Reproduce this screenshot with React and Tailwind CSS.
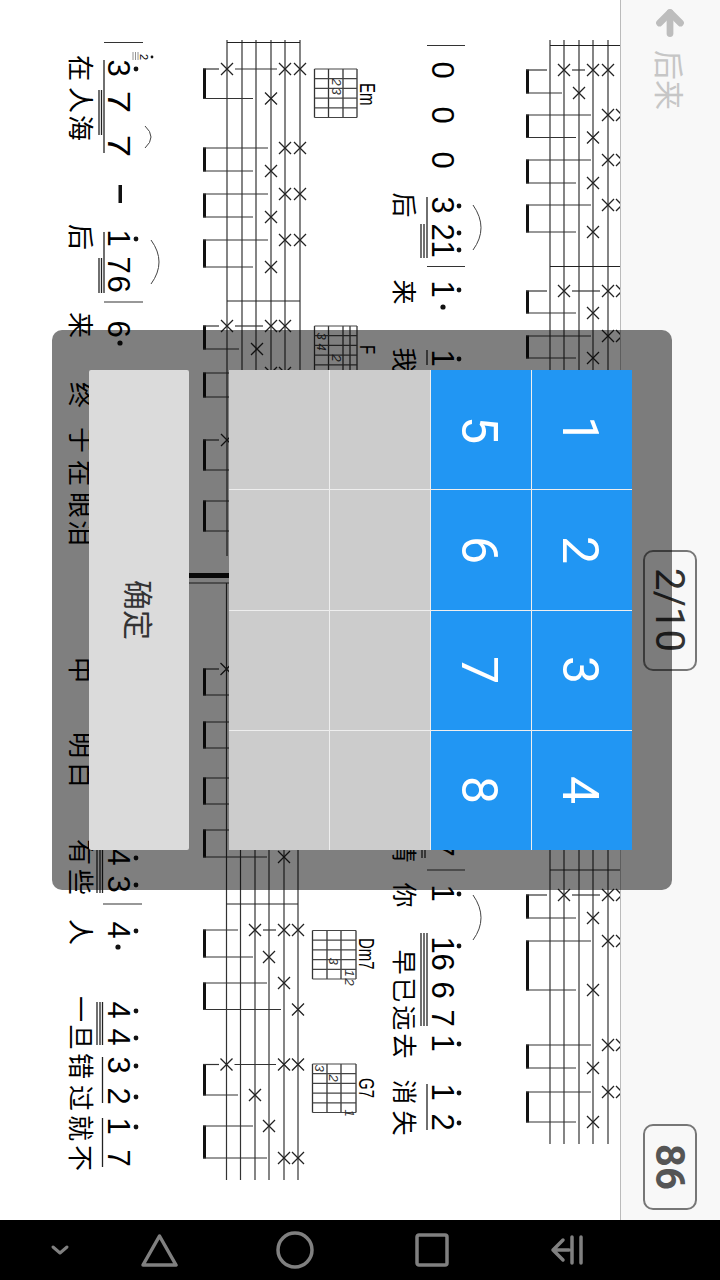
import { ArrowUp } from 'lucide-react';

const INK = '#000';

// right hand staff strings (page 1, top row of the score)
const R = [550, 564, 579, 593, 608, 622];
const L1 = [227, 242, 256, 271, 285, 300];
const L2 = [226.5, 240.5, 255, 269, 284, 298];

// [y1, arm end, crosses, y2, arm end, crosses]
const rightBeats = [
  [70, 547, [564, 593, 608], 93, 562, [579]],
  [115, 591, [608, 622], 137.5, 576, [593]],
  [160, 591, [608, 622], 183, 576, [593]],
  [205, 591, [608, 622], 232, 576, [593]],
  [291, 547, [564, 608, 622], 313, 576, [593]],
  [336, 591, [608, 622], 358, 576, [593]],
  [895, 547, [564, 608, 622], 918, 576, [593]],
  [941, 591, [608, 622], 990, 576, [593]],
  [1045, 591, [608, 622], 1068, 576, [593]],
  [1092, 591, [608, 622], 1122, 576, [593]],
];

const leftBeats = [
  [69, 219, [227, 285, 300], 98.5, 253, [271]],
  [148, 268, [285, 300], 171, 253, [271]],
  [194, 268, [285, 300], 217, 253, [271]],
  [240, 268, [285, 300], 267, 253, [271]],
  [326, 219, [227, 271, 285], 349, 239, [257]],
  [373, 253, [271, 285], 397, 239, []],
  [440, 219, [227], 470, 239, []],
  [501, 239, [], 531, 239, []],
  [669, 219, [226.5], 695, 239, []],
  [722, 239, [], 748, 239, []],
  [778, 239, [], 804, 239, []],
  [830, 239, [], 857, 267, [284]],
  [930, 238, [255, 284, 298], 957, 253, [269]],
  [983, 267, [284], 1009.5, 281, [298]],
  [1064.5, 219, [226.5, 284, 298], 1095, 238, [255]],
  [1126, 253, [269], 1158, 267, [284, 298]],
];

// digit, centre y, octave dot, horizontal stretch
const rowA = [
  ['0', 70], ['0', 115], ['0', 160], ['3', 205, 1], ['2', 232, 1], ['1', 249, 1], ['1', 289, 1],
  ['1', 358, 1], ['7', 848], ['1', 893, 1], ['1', 945, 1], ['6', 962], ['6', 990], ['7', 1018],
  ['1', 1043, 1], ['1', 1092, 1], ['2', 1122, 1],
];
const rowB = [
  ['3', 68, 1], ['7', 102, 0, 1.3], ['7', 146, 0, 1.3], ['1', 238, 1], ['7', 265], ['6', 284], ['6', 329],
  ['4', 857, 1], ['3', 884, 1], ['4', 930, 1], ['4', 1010, 1], ['4', 1037, 1], ['3', 1065, 1],
  ['2', 1096, 1], ['1', 1126, 1], ['7', 1158],
];

const lyricsA = [['后', 205], ['来', 292], ['我', 360], ['情', 850], ['你', 895], ['早', 962], ['已', 990], ['远', 1018], ['去', 1046], ['消', 1092], ['失', 1123]];
const lyricsB = [
  ['在', 68], ['人', 100], ['海', 128], ['后', 237], ['来', 325], ['终', 395], ['于', 440], ['在', 473], ['眼', 505], ['泪', 533],
  ['中', 670], ['明', 745], ['白', 775], ['有', 852], ['些', 882], ['人', 932], ['一', 1009], ['旦', 1037], ['错', 1066], ['过', 1098], ['就', 1128], ['不', 1158],
];

// horizontal rules under the digits: [x, y1, y2]
const beams = [
  [427, 197, 258], [424, 224, 258], [421, 224, 258], [427, 350, 365],
  [427, 933, 1026], [424, 933, 1026], [421, 933, 1026], [427, 1084, 1130], [425, 845, 858], [422, 845, 858],
  [104, 60, 153], [101.5, 90, 135], [99, 90, 135], [104, 232, 293], [101.5, 258, 293], [99, 258, 293],
  [102.5, 845, 893], [100, 845, 893], [97, 845, 893], [102.5, 1002, 1045], [100, 1002, 1045], [97, 1002, 1045],
  [102.5, 1057, 1103], [102.5, 1118, 1167],
];

const bars = [[427, 465, 45.5], [427, 465, 266.5], [427, 465, 870], [104, 143, 42.5], [104, 143, 302], [103, 142, 904]];

function Sideways({ x, y, size = 30, fill = INK, anchor = 'middle', style, sx = 1, sy = 1, children }) {
  return (
    <text transform={`translate(${x} ${y}) rotate(90) scale(${sx} ${sy})`} textAnchor={anchor} fontSize={size} fill={fill} fontStyle={style}>
      {children}
    </text>
  );
}

function Cross({ x, y }) {
  return <path d={`M${x - 6} ${y - 6}L${x + 6} ${y + 6}M${x - 6} ${y + 6}L${x + 6} ${y - 6}`} stroke="#222" strokeWidth="1.3" />;
}

function Beat({ beat, stem }) {
  const [y1, end1, xs1, y2, end2, xs2] = beat;
  const link = (xs, y) => xs.slice(1).map((x, i) => (
    x - xs[i] > 20 ? <line key={x} x1={xs[i] + 8} x2={x - 8} y1={y} y2={y} stroke="#333" strokeWidth="1.2" /> : null
  ));
  return (
    <g>
      <rect x={stem} y={y1 - 0.5} width="3" height={y2 - y1 + 1} fill="#111" />
      <line x1={stem} x2={end1} y1={y1} y2={y1} stroke="#333" strokeWidth="1.2" />
      <line x1={stem} x2={end2} y1={y2} y2={y2} stroke="#333" strokeWidth="1.2" />
      {link(xs1, y1)}
      {xs1.map((x) => <Cross key={x} x={x} y={y1} />)}
      {xs2.map((x) => <Cross key={x} x={x} y={y2} />)}
    </g>
  );
}

function Notes({ items, base, dotX }) {
  return items.map(([d, y, dot, sx]) => (
    <g key={`${d}${y}`}>
      <Sideways x={base} y={y} size={31} sx={sx || 1}>{d}</Sideways>
      {dot ? <circle cx={dotX} cy={y + 1} r="2.4" fill="#111" /> : null}
    </g>
  ));
}

function ChordBox({ xs, ys, name, nameX, nameY, marks }) {
  const x0 = xs[0];
  const x1 = xs[xs.length - 1];
  const y0 = ys[0];
  const y1 = ys[ys.length - 1];
  return (
    <g>
      {xs.map((x) => <line key={x} x1={x} x2={x} y1={y0} y2={y1} stroke="#333" strokeWidth="1.3" />)}
      {ys.map((y) => <line key={y} x1={x0} x2={x1} y1={y} y2={y} stroke="#444" strokeWidth="1.2" />)}
      <Sideways x={nameX} y={nameY} size={15} sy={1.45} anchor="start">{name}</Sideways>
      {marks.map(([d, x, y]) => <Sideways key={`${d}${y}`} x={x} y={y} size={13} fill="#333" style="italic">{d}</Sideways>)}
    </g>
  );
}

function Score() {
  const ticks = (start) => [0, 1, 2, 3, 4, 5].map((i) => start + i * 9.7);
  return (
    <svg width="620" height="1220" viewBox="0 0 620 1220" className="block font-['Liberation_Sans','Noto_Sans_CJK_SC',sans-serif]">
      {/* staves */}
      {R.map((x) => <line key={x} x1={x} x2={x} y1="40" y2="1144" stroke="#333" strokeWidth="1.2" />)}
      {L1.map((x) => <line key={x} x1={x} x2={x} y1="40" y2="556" stroke="#333" strokeWidth="1.2" />)}
      {L2.map((x) => <line key={x} x1={x} x2={x} y1="583" y2="1180" stroke="#333" strokeWidth="1.2" />)}
      {[45.5, 266.5, 870].map((y) => <line key={y} x1="550" x2="622" y1={y} y2={y} stroke="#222" strokeWidth="1.2" />)}
      {[42.5, 301].map((y) => <line key={y} x1="227" x2="300" y1={y} y2={y} stroke="#222" strokeWidth="1.2" />)}
      <line x1="226.5" x2="298" y1="904" y2="904" stroke="#222" strokeWidth="1.2" />
      <rect x="180" y="573" width="60" height="5" fill="#111" />
      <line x1="180" x2="240" y1="583" y2="583" stroke="#333" strokeWidth="1.2" />

      {rightBeats.map((b) => <Beat key={b[0]} beat={b} stem={526} />)}
      {leftBeats.map((b) => <Beat key={b[0]} beat={b} stem={203} />)}

      {/* numbered notation */}
      <Notes items={rowA} base={432} dotX={459} />
      <Notes items={rowB} base={108} dotX={136} />
      {beams.map(([x, y1, y2]) => <line key={`${x}${y1}`} x1={x} x2={x} y1={y1} y2={y2} stroke="#222" strokeWidth="1.3" />)}
      {bars.map(([x1, x2, y]) => <line key={`${x1}${y}`} x1={x1} x2={x2} y1={y} y2={y} stroke="#333" strokeWidth="1.2" />)}
      <circle cx="443" cy="307" r="2.6" fill="#111" />
      <circle cx="120" cy="343" r="2.6" fill="#111" />
      <circle cx="118" cy="947" r="2.6" fill="#111" />
      <rect x="118.5" y="185" width="3.5" height="18" fill="#111" />

      {/* grace note */}
      <Sideways x={140} y={57} size={11}>2</Sideways>
      <circle cx="152" cy="57" r="1.4" fill="#111" />
      <path d="M133 52v8M135.5 52v8M138 52v8" stroke="#777" strokeWidth="0.8" />

      {/* ties */}
      <path d="M473 205Q489 228 473 250M473 895Q489 918 473 940M145 126Q157 137 145 148M151 240Q167 262 151 284" fill="none" stroke="#444" strokeWidth="1" />

      {lyricsA.map(([c, y]) => <Sideways key={`${c}${y}`} x={395} y={y} size={25}>{c}</Sideways>)}
      {lyricsB.map(([c, y]) => <Sideways key={`${c}${y}`} x={71} y={y} size={26}>{c}</Sideways>)}

      {/* chord boxes */}
      <ChordBox xs={[314.5, 328.5, 343, 357]} ys={ticks(69)} name="Em" nameX={360} nameY={83} marks={[['2', 332, 82], ['3', 332, 91]]} />
      <ChordBox xs={[314.5, 328.5, 343, 350, 357]} ys={ticks(326)} name="F" nameX={360} nameY={345} marks={[['3', 317, 336], ['4', 317, 347], ['2', 332, 358]]} />
      <ChordBox xs={[312.5, 327, 341, 356]} ys={ticks(930.5)} name="Dm7" nameX={359} nameY={938} marks={[['3', 329, 961], ['1', 345, 973], ['2', 345, 982]]} />
      <ChordBox xs={[312.5, 327, 341, 356]} ys={ticks(1064)} name="G7" nameX={359} nameY={1078} marks={[['3', 315, 1068], ['2', 329, 1078], ['1', 345, 1113]]} />
    </svg>
  );
}

function SideBadge({ className, children }) {
  return (
    <div className={`w-[54px] rounded-[10px] border-2 border-[#777] flex items-center justify-center font-['Roboto',sans-serif] text-[40px] leading-none [writing-mode:vertical-rl] ${className}`}>
      {children}
    </div>
  );
}

function NavBar() {
  return (
    <div className="h-[60px] bg-black flex items-center pl-[50px] text-[#808080] shrink-0">
      <svg width="20" height="14" viewBox="0 0 20 14" fill="none" stroke="currentColor" strokeWidth="3" strokeLinecap="round" strokeLinejoin="round" className="mr-[71px]">
        <path d="M3 4l7 6 7-6" />
      </svg>
      <svg width="37" height="34" viewBox="0 0 37 34" fill="none" stroke="currentColor" strokeWidth="3.5" strokeLinejoin="round" className="mr-[98px]">
        <path d="M18.5 3L35 32H2z" />
      </svg>
      <svg width="38" height="38" viewBox="0 0 38 38" fill="none" stroke="currentColor" strokeWidth="3.5" className="mr-[101px]">
        <circle cx="19" cy="19" r="17" />
      </svg>
      <svg width="34" height="34" viewBox="0 0 34 34" fill="none" stroke="currentColor" strokeWidth="3.5" strokeLinejoin="round" className="mr-[101px]">
        <rect x="2" y="2" width="30" height="30" rx="2" />
      </svg>
      <svg width="34" height="30" viewBox="0 0 34 30" fill="none" stroke="currentColor" strokeWidth="3.5" strokeLinecap="round" strokeLinejoin="round">
        <path d="M13 5L3 15l10 10M3 15h16M22 2v26M31 2v26" />
      </svg>
    </div>
  );
}

const keys = ['1', '2', '3', '4', '5', '6', '7', '8'];

export default function App() {
  return (
    <div className="relative w-[720px] h-[1280px] flex flex-col bg-white overflow-hidden">
      <div className="flex flex-1 min-h-0">
        <div className="w-[620px] overflow-hidden">
          <Score />
        </div>
        <div className="w-[100px] bg-[#f8f8f8] border-l border-[#bbbbbb] grid grid-rows-[1fr_auto_1fr] justify-items-center pr-[2px]">
          <div className="flex flex-col items-center pt-[5px] text-[#bdbdbd]">
            <ArrowUp size={36} strokeWidth={4.5} />
            <span className="mt-[9px] ml-[3px] text-[30px] leading-none text-[#c6c6c6] [writing-mode:vertical-rl] [text-orientation:sideways] font-['Noto_Sans_CJK_SC',sans-serif]">后来</span>
          </div>
          <SideBadge className="h-[121px] text-[#333333] pr-[2px]">2/10</SideBadge>
          <div className="flex items-end pb-[10px]">
            <SideBadge className="h-[86px] font-bold text-[#555555] pr-[2px]">86</SideBadge>
          </div>
        </div>
      </div>
      <NavBar />

      {/* dialog over the score */}
      <div className="absolute left-[52px] top-[330px] w-[620px] h-[560px] rounded-[10px] bg-black/50 flex items-stretch pl-[37px] pr-[40px] py-[40px] gap-[40px]">
        <button className="w-[100px] bg-[#dbdbdb] rounded-[2px] text-[#333333] text-[30px] leading-none flex items-center justify-center font-['Noto_Sans_CJK_SC',sans-serif]">
          <span className="[writing-mode:vertical-rl] [text-orientation:sideways] ml-[2px]">确定</span>
        </button>
        <div className="flex-1 grid grid-cols-[repeat(4,100px)] grid-rows-4 gap-px bg-[#eeeeee]">
          {[0, 1, 2, 3].map((row) => [0, 1].map((col) => <div key={`g${row}${col}`} className="bg-[#cccccc]" />).concat(
            [4, 0].map((offset) => (
              <div key={`k${row}${offset}`} className="bg-[#2196f3] flex items-center justify-center text-white text-[50px] leading-none font-['Roboto',sans-serif]">
                <span className="[writing-mode:vertical-rl] mr-[4px]">{keys[row + offset]}</span>
              </div>
            )),
          ))}
        </div>
      </div>
    </div>
  );
}
